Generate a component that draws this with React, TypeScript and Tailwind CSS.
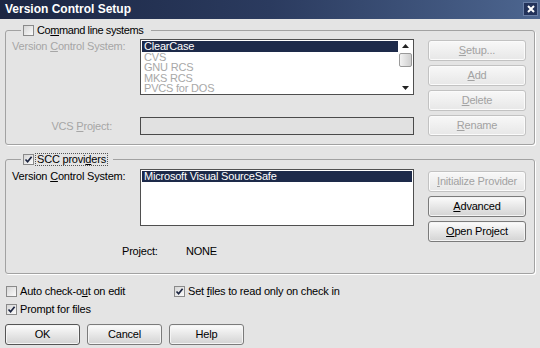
import type { ReactNode } from 'react';

const navy = 'bg-[#1d2a4a]';

function Check({ checked = false }: { checked?: boolean }) {
  return (
    <span className="w-[11px] h-[11px] shrink-0 border border-[#8a8a8a] bg-gradient-to-br from-[#d6d6d6] to-[#fbfbfb] flex items-center justify-center">
      {checked && (
        <svg width="9" height="9" viewBox="0 0 9 9">
          <path d="M1.5 4.5 L3.6 6.8 L7.6 1.8" fill="none" stroke="#1b2440" strokeWidth="1.7" />
        </svg>
      )}
    </span>
  );
}

function Btn({ children, disabled = false, strong = false, className = '' }: { children: ReactNode; disabled?: boolean; strong?: boolean; className?: string }) {
  const look = disabled
    ? 'border-[#c2c2c2] bg-gradient-to-b from-[#f8f8f8] to-[#e7e7e7] text-[#a2a2a2] shadow-[inset_0_0_0_1px_#fbfbfb]'
    : strong
      ? 'border-[#555] bg-gradient-to-b from-[#fcfcfc] to-[#d3d3d3] shadow-[inset_0_0_0_1px_#f4f4f4]'
      : 'border-[#7b7b7b] bg-gradient-to-b from-[#fcfcfc] to-[#d3d3d3] shadow-[inset_0_0_0_1px_#f4f4f4]';
  return (
    <div className={`h-[21px] rounded-[3px] border flex items-center justify-center ${look} ${className}`}>
      <span>{children}</span>
    </div>
  );
}

function Arrow({ up }: { up?: boolean }) {
  return (
    <svg width="7" height="4" viewBox="0 0 7 4">
      <polygon points={up ? '0,4 7,4 3.5,0' : '0,0 7,0 3.5,4'} fill="#222" />
    </svg>
  );
}

function TitleBar() {
  return (
    <div className="h-[19px] shrink-0 flex items-start justify-between bg-gradient-to-r from-[#1b2643] via-[#2b3b5f] to-[#4d6690] pl-[5px] pr-[2px]">
      <span className="text-white font-bold text-[12px] tracking-normal leading-[18px]">Version Control Setup</span>
      <div className="mt-[2px] w-[15px] h-[14px] border border-[#6a7fa6] bg-[#22325a] flex items-center justify-center">
        <svg width="8" height="8" viewBox="0 0 8 8">
          <path d="M1 1 L7 7 M7 1 L1 7" stroke="#fff" strokeWidth="2" />
        </svg>
      </div>
    </div>
  );
}

const cmdItems = ['CVS', 'GNU RCS', 'MKS RCS', 'PVCS for DOS'];

export default function App() {
  return (
    <div className="w-[540px] h-[348px] bg-[#e4e4e4] flex flex-col font-['Liberation_Sans',Arial,sans-serif] text-[11px] tracking-[-0.2px] text-black leading-none overflow-hidden">
      <TitleBar />
      <div className="flex flex-col px-[5px] pt-[5px]">
        {/* command line group */}
        <fieldset className="border border-[#a2a2a2] rounded-[3px] shadow-[1px_1px_0_#fff] px-0 pt-[3px] pb-[8px] min-w-0">
          <legend className="ml-[15px] pl-[2px] pr-[8px]">
            <div className="h-[12px] flex items-center gap-[3px]">
              <Check />
              <span className="tracking-[-0.4px]">Co<u>m</u>mand line systems</span>
            </div>
          </legend>
          <div className="flex pl-[6px] pr-[8px]">
            <div className="w-[402px] flex flex-col">
              <div className="flex">
                <div className="w-[128px] pt-[2px] text-[#a6a6a6]">Version <u>C</u>ontrol System:</div>
                <div className="w-[274px] h-[56px] border border-[#4f4f4f] bg-white flex">
                  <div className="flex-1 pl-[1px] pt-[1px] flex flex-col leading-[10.6px]">
                    <div className={`h-[10.6px] ${navy} text-white pl-[2px]`}>ClearCase</div>
                    {cmdItems.map(t => (
                      <div key={t} className="h-[10.6px] pl-[2px] text-[#a8a8a8]">{t}</div>
                    ))}
                  </div>
                  <div className="w-[15px] flex flex-col items-center">
                    <div className="h-[12px] flex items-center justify-center"><Arrow up /></div>
                    <div className="h-[14px] w-[13px] mt-[1px] border border-[#9a9a9a] rounded-[2px] bg-gradient-to-r from-[#f3f3f3] to-[#cfcfcf]" />
                    <div className="flex-1" />
                    <div className="h-[12px] flex items-center justify-center"><Arrow /></div>
                  </div>
                </div>
              </div>
              <div className="flex items-center mt-[22px]">
                <div className="w-[128px] pr-[28px] text-right text-[#a6a6a6]">VCS <u>P</u>roject:</div>
                <div className="w-[274px] h-[18px] border border-[#4a4a4a] bg-[#e1e1e1]" />
              </div>
            </div>
            <div className="ml-[14px] w-[98px] flex flex-col gap-[4px] pt-[1px]">
              <Btn disabled><u>S</u>etup...</Btn>
              <Btn disabled><u>A</u>dd</Btn>
              <Btn disabled><u>D</u>elete</Btn>
              <Btn disabled><u>R</u>ename</Btn>
            </div>
          </div>
        </fieldset>

        {/* SCC group */}
        <fieldset className="mt-[8px] border border-[#a2a2a2] rounded-[3px] shadow-[1px_1px_0_#fff] px-0 pt-[4px] pb-[16px] min-w-0">
          <legend className="ml-[15px] pl-[2px] pr-[6px]">
            <div className="h-[12px] flex items-center gap-[2px]">
              <Check checked />
              <span className="outline outline-1 outline-dotted outline-[#555] px-[1px]">SCC provi<u>d</u>ers</span>
            </div>
          </legend>
          <div className="flex pl-[6px] pr-[8px]">
            <div className="w-[402px] flex flex-col">
              <div className="flex">
                <div className="w-[128px] pt-[2px]">Version <u>C</u>ontrol System:</div>
                <div className="w-[274px] h-[57px] border border-[#4f4f4f] bg-white p-[1px]">
                  <div className={`h-[11px] ${navy} text-white pl-[2px] flex items-center`}>Microsoft Visual SourceSafe</div>
                </div>
              </div>
              <div className="flex items-center h-[12px] mt-[19px]">
                <span className="ml-[110px] w-[64px]">Project:</span>
                <span>NONE</span>
              </div>
            </div>
            <div className="ml-[14px] w-[98px] flex flex-col gap-[4px] pt-[2px]">
              <Btn disabled><u>I</u>nitialize Provider</Btn>
              <Btn><u>A</u>dvanced</Btn>
              <Btn><u>O</u>pen Project</Btn>
            </div>
          </div>
        </fieldset>

        {/* options */}
        <div className="mt-[11px] h-[12px] flex items-center">
          <div className="w-[169px] pl-[1px] flex items-center gap-[3px]">
            <Check />
            <span>Auto check-o<u>u</u>t on edit</span>
          </div>
          <div className="flex items-center gap-[3px]">
            <Check checked />
            <span>Set <u>f</u>iles to read only on check in</span>
          </div>
        </div>
        <div className="mt-[6px] h-[12px] pl-[1px] flex items-center gap-[3px]">
          <Check checked />
          <span>Prompt for files</span>
        </div>

        <div className="mt-[9px] flex gap-[7px]">
          <Btn strong className="w-[75px] h-[20px]">OK</Btn>
          <Btn className="w-[75px] h-[20px]">Cancel</Btn>
          <Btn className="w-[75px] h-[20px]">Help</Btn>
        </div>
      </div>
    </div>
  );
}
